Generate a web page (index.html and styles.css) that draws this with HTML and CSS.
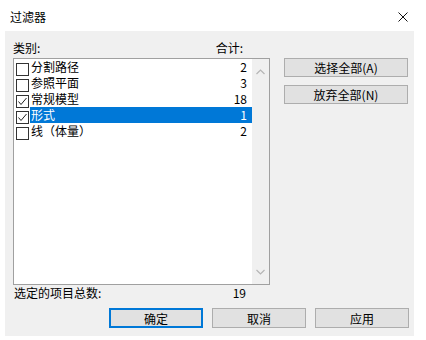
FILE: index.html
```html
<!DOCTYPE html>
<html lang="zh-CN">
<head>
    <meta charset="UTF-8">
    <title>过滤器</title>
    <link rel="stylesheet" href="styles.css">
</head>
<body>
    <div class="titlebar">
        <span class="title">过滤器</span>
        <svg class="close" width="10" height="10" viewBox="0 0 10 10">
            <path d="M0.5 0.5 L9.5 9.5 M9.5 0.5 L0.5 9.5" stroke="#111" stroke-width="1" fill="none"/>
        </svg>
    </div>

    <div class="panel">
        <div class="main">
            <div class="left">
                <div class="header">
                    <span>类别:</span>
                    <span>合计:</span>
                </div>
                <div class="listbox">
                    <div class="rows">
                        <div class="row">
                            <span class="check"></span>
                            <span class="item"><span>分割路径</span><span>2</span></span>
                        </div>
                        <div class="row">
                            <span class="check"></span>
                            <span class="item"><span>参照平面</span><span>3</span></span>
                        </div>
                        <div class="row">
                            <span class="check checked">
                                <svg width="11" height="11" viewBox="0 0 11 11"><path d="M1.5 5.5 L4 8.5 L9.5 2" stroke="#222" stroke-width="1" fill="none"/></svg>
                            </span>
                            <span class="item"><span>常规模型</span><span>18</span></span>
                        </div>
                        <div class="row">
                            <span class="check checked">
                                <svg width="11" height="11" viewBox="0 0 11 11"><path d="M1.5 5.5 L4 8.5 L9.5 2" stroke="#222" stroke-width="1" fill="none"/></svg>
                            </span>
                            <span class="item selected"><span>形式</span><span>1</span></span>
                        </div>
                        <div class="row">
                            <span class="check"></span>
                            <span class="item"><span>线（体量）</span><span>2</span></span>
                        </div>
                    </div>
                    <div class="scrollbar">
                        <svg width="9" height="6" viewBox="0 0 9 6"><path d="M0.5 5 L4.5 1 L8.5 5" stroke="#b5b5b5" stroke-width="1.2" fill="none"/></svg>
                        <svg width="9" height="6" viewBox="0 0 9 6"><path d="M0.5 1 L4.5 5 L8.5 1" stroke="#b5b5b5" stroke-width="1.2" fill="none"/></svg>
                    </div>
                </div>
                <div class="summary">
                    <span>选定的项目总数:</span>
                    <span>19</span>
                </div>
            </div>
            <div class="side">
                <button class="btn">选择全部(A)</button>
                <button class="btn">放弃全部(N)</button>
            </div>
        </div>
        <div class="footer">
            <button class="btn wide default">确定</button>
            <button class="btn wide">取消</button>
            <button class="btn wide">应用</button>
        </div>
    </div>
</body>
</html>
```

FILE: styles.css
```css
body {
    margin: 0;
    background-color: #ffffff;
    font-family: "Noto Sans CJK SC", "Microsoft YaHei", sans-serif;
    font-size: 12px;
    color: #000;
}
.titlebar {
    height: 31px;
    display: flex;
    align-items: center;
    justify-content: space-between;
    padding: 0 18px 0 10px;
}
.title {
    line-height: 14px;
    padding-top: 2px;
}
.close {
    margin-top: 3px;
}
.panel {
    width: 409px;
    height: 305px;
    box-sizing: border-box;
    margin-left: 5px;
    background-color: #f0f0f0;
    padding: 9px 5px 0 8px;
}
.main {
    display: flex;
    gap: 14px;
}
.left {
    width: 257px;
}
.header {
    height: 18px;
    line-height: 16px;
    display: flex;
    justify-content: space-between;
    padding-right: 27px;
}
.listbox {
    height: 227px;
    box-sizing: border-box;
    border: 1px solid #a0a0a0;
    background-color: white;
    display: flex;
}
.rows {
    flex: 1;
}
.row {
    height: 16px;
    display: flex;
}
.check {
    width: 11px;
    height: 11px;
    border: 1px solid #333;
    margin: 4px 1px 0 2px;
    background: white;
    display: flex;
}
.item {
    flex: 1;
    display: flex;
    justify-content: space-between;
    line-height: 16px;
    padding: 0 5px 0 1px;
}
.item.selected {
    background-color: #0078d7;
    color: white;
}
.scrollbar {
    width: 17px;
    background-color: #f0f0f0;
    display: flex;
    flex-direction: column;
    justify-content: space-between;
    align-items: center;
    padding: 10px 0 9px;
    box-sizing: border-box;
}
.summary {
    height: 15px;
    line-height: 16px;
    display: flex;
    justify-content: space-between;
    padding: 0 24px 0 1px;
}
.side {
    display: flex;
    flex-direction: column;
    gap: 8px;
    padding-top: 18px;
}
.btn {
    font-family: "Noto Sans CJK SC", "Microsoft YaHei", sans-serif;
    font-size: 12px;
    line-height: 15px;
    height: 19px;
    width: 124px;
    padding: 0;
    background-color: #e1e1e1;
    border: 1px solid #adadad;
    color: #000;
}
.footer {
    display: flex;
    justify-content: flex-end;
    gap: 9px;
    margin-top: 8px;
}
.btn.wide {
    width: 94px;
    height: 20px;
}
.btn.default {
    border: 2px solid #0078d7;
}
```
